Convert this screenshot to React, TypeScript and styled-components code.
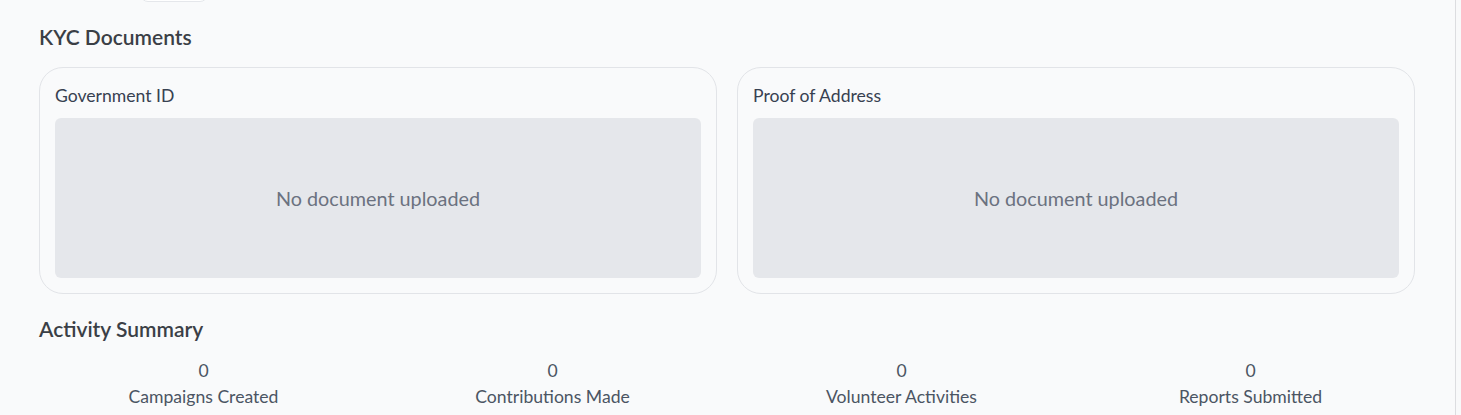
import styled, { createGlobalStyle } from 'styled-components';

const GlobalStyle = createGlobalStyle`
  html, body {
    margin: 0;
    padding: 0;
    background: #f9fafb;
    font-family: Lato, "Open Sans", sans-serif;
    color: #374151;
  }
  * { box-sizing: border-box; }
`;

const Shell = styled.div`
  display: flex;
  min-height: 415px;
  overflow: hidden;
`;

const Main = styled.main`
  flex: 1;
  padding: 0 40px 0 39px;
  border-right: 1px solid #dcdde0;
`;

const Gutter = styled.div`
  width: 5px;
  background: #f8f9fa;
`;

const TopRow = styled.div`
  display: flex;
  padding-left: 101px;
  height: 2px;
`;

const GhostButton = styled.button`
  width: 68px;
  height: 32px;
  margin-top: -30px;
  border: 1px solid #e5e7eb;
  border-radius: 8px;
  background: #ffffff;
`;

const SectionTitle = styled.h2<{ $top: number }>`
  margin: ${(p) => p.$top}px 0 16px;
  font-size: 21px;
  line-height: 28px;
  font-weight: 600;
  color: #3b3f46;
`;

const CardGrid = styled.div`
  display: grid;
  grid-template-columns: 1fr 1fr;
  gap: 20px;
`;

const Card = styled.section`
  border: 1px solid #e2e4e8;
  border-radius: 24px;
  padding: 15px;
`;

const CardLabel = styled.div`
  font-size: 17.6px;
  line-height: 26px;
  margin-bottom: 9px;
  color: #374151;
`;

const Placeholder = styled.div`
  height: 160px;
  border-radius: 6px;
  background: #e5e7eb;
  display: flex;
  align-items: center;
  justify-content: center;
  font-size: 19.8px;
  color: #6b7280;
`;

const StatsGrid = styled.div`
  display: grid;
  grid-template-columns: repeat(4, 1fr);
  gap: 20px;
`;

const Stat = styled.div`
  display: flex;
  flex-direction: column;
  align-items: center;
  color: #4b5563;
`;

const StatValue = styled.div`
  font-size: 17.6px;
  line-height: 24px;
`;

const StatLabel = styled.div`
  margin-top: 2px;
  font-size: 17.6px;
  line-height: 24px;
`;

const documents = ['Government ID', 'Proof of Address'];

const stats = [
  { label: 'Campaigns Created', value: 0 },
  { label: 'Contributions Made', value: 0 },
  { label: 'Volunteer Activities', value: 0 },
  { label: 'Reports Submitted', value: 0 },
];

export default function App() {
  return (
    <>
      <GlobalStyle />
      <Shell>
        <Main>
          <TopRow>
            <GhostButton aria-hidden />
          </TopRow>

          <SectionTitle $top={21}>KYC Documents</SectionTitle>
          <CardGrid>
            {documents.map((doc) => (
              <Card key={doc}>
                <CardLabel>{doc}</CardLabel>
                <Placeholder>No document uploaded</Placeholder>
              </Card>
            ))}
          </CardGrid>

          <SectionTitle $top={21}>Activity Summary</SectionTitle>
          <StatsGrid>
            {stats.map((s) => (
              <Stat key={s.label}>
                <StatValue>{s.value}</StatValue>
                <StatLabel>{s.label}</StatLabel>
              </Stat>
            ))}
          </StatsGrid>
        </Main>
        <Gutter />
      </Shell>
    </>
  );
}
